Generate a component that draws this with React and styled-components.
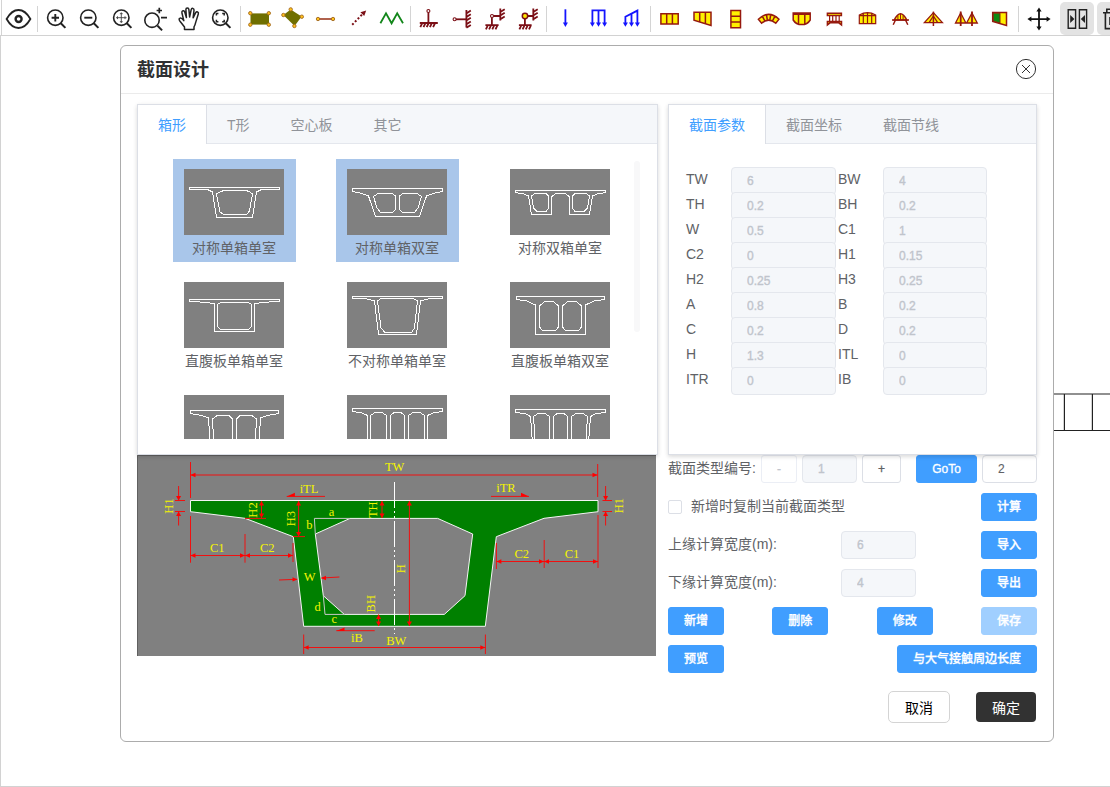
import React from "react";
import styled, { createGlobalStyle, css } from "styled-components";

const GlobalStyle = createGlobalStyle`
  *, *::before, *::after { box-sizing: border-box; }
  body {
    margin: 0;
    overflow: hidden;
    background: #fff;
    color: #606266;
    font-family: "Liberation Sans", "Noto Sans CJK SC", sans-serif;
    font-size: 14px;
  }
  button, input { font-family: inherit; margin: 0; }
`;

/* ---------- page frame ---------- */

const Page = styled.div`
  position: relative;
  display: flex;
  flex-direction: column;
  width: 1110px;
  height: 787px;
  overflow: hidden;
`;

const Toolbar = styled.header`
  display: flex;
  flex: none;
  height: 35px;
  margin-left: 1px;
  border-left: 1px solid #d4d4d4;
`;

const Separator = styled.i`
  flex: none;
  width: 1px;
  height: 26px;
  margin: 6px 2px 0 ${(p) => (p.$tight ? 1 : 2)}px;
  background: #d4d4d4;
`;

const Tool = styled.button`
  display: block;
  flex: none;
  width: ${(p) => (p.$active ? 34 : 33)}px;
  height: ${(p) => (p.$active ? 33 : 36)}px;
  margin-top: ${(p) => (p.$active ? 2 : 0)}px;
  margin-left: ${(p) => p.$gap || 0}px;
  padding: 0;
  border: 0;
  border-radius: 5px;
  background: ${(p) => (p.$active ? "#e3e3e3" : "transparent")};

  svg {
    display: block;
    margin-top: ${(p) => (p.$active ? -2 : 0)}px;
    overflow: visible;
  }
`;

const Canvas = styled.main`
  display: flex;
  flex: 1;
  align-items: flex-start;
  justify-content: flex-end;
  padding-top: 357px;
  border: 1px solid #d2d2d2;
  border-right: 0;

  svg { display: block; }
`;

/* ---------- dialog ---------- */

const Dialog = styled.section`
  position: absolute;
  left: 120px;
  top: 45px;
  width: 934px;
  height: 697px;
  border: 1px solid #acacac;
  border-radius: 6px;
  background: #fff;
`;

const DialogHeader = styled.div`
  display: flex;
  align-items: center;
  justify-content: space-between;
  height: 48px;
  padding: 0 16px;
  border-bottom: 1px solid #ebebeb;
`;

const Title = styled.h2`
  margin: 0;
  color: #303133;
  font-size: 18px;
  font-weight: 700;
  line-height: 24px;
`;

const Close = styled.button`
  width: 22px;
  height: 22px;
  margin-bottom: 2px;
  padding: 0;
  border: 0;
  background: none;
  svg { display: block; }
`;

const DialogBody = styled.div`
  display: flex;
  gap: 10px;
  padding: 10px 16px 0;
`;

const Column = styled.div`
  width: ${(p) => p.$width}px;
`;

const Panel = styled.div`
  position: relative;
  z-index: 1;
  height: 351px;
  border: 1px solid #dcdfe6;
  background: #fff;
  box-shadow: 0 2px 4px rgba(0, 0, 0, 0.12), 0 0 6px rgba(0, 0, 0, 0.04);
`;

const TabBar = styled.div`
  display: flex;
  height: 39px;
  border-bottom: 1px solid #e4e7ed;
  background: #f5f7fa;
`;

const Tab = styled.div`
  height: 39px;
  margin-left: -1px;
  padding: 0 20px;
  border: 1px solid transparent;
  border-top: 0;
  border-bottom: 0;
  color: #909399;
  line-height: 40px;
  white-space: nowrap;
  ${(p) =>
    p.$active &&
    css`
      border-color: #dcdfe6;
      background: #fff;
      color: #409eff;
    `}
`;

const Gallery = styled.div`
  display: grid;
  grid-template-columns: repeat(3, 163px);
  grid-auto-rows: 103px;
  row-gap: 10px;
  justify-items: center;
  height: 280px;
  margin: 15px 15px 0;
  overflow: hidden;
`;

const ScrollThumb = styled.i`
  position: absolute;
  top: 56px;
  right: 17px;
  width: 6px;
  height: 171px;
  border-radius: 3px;
  background: #f8f8f9;
`;

const Card = styled.figure`
  display: flex;
  flex-direction: column;
  align-items: center;
  width: 123px;
  height: 103px;
  margin: 0;
  padding: 10px 1px 0 0;
  background: ${(p) => (p.$selected ? "#a9c6ea" : "transparent")};

  svg {
    flex: none;
    background: #808080;
    fill: none;
    stroke: #fff;
    shape-rendering: crispEdges;
  }
`;

const Caption = styled.figcaption`
  line-height: 26px;
  white-space: nowrap;
`;

const Diagram = styled.svg`
  display: block;
  background: #808080;

  text {
    fill: #f4f400;
    font-family: "Liberation Serif", serif;
    font-size: 12.5px;
    text-anchor: middle;
  }
`;

/* ---------- form ---------- */

const Params = styled.div`
  display: grid;
  grid-template-columns: 45px 107px 45px 104px;
  grid-auto-rows: 25px;
  padding: 23px 17px 0;
  line-height: 25px;
`;

const Input = styled.input`
  display: block;
  position: relative;
  width: ${(p) => p.$width}px;
  height: 28px;
  padding: 0 15px;
  border: 1px solid ${(p) => (p.disabled ? "#e4e7ed" : "#dcdfe6")};
  border-radius: 4px;
  outline: 0;
  background: ${(p) => (p.disabled ? "#f5f7fa" : "#fff")};
  color: ${(p) => (p.disabled ? "#c0c4cc" : "#606266")};
  font-size: 12px;
  line-height: 26px;
  -webkit-text-stroke: ${(p) => (p.disabled ? 0.35 : 0.1)}px;
`;

const Controls = styled.div`
  display: flex;
  flex-direction: column;
  gap: 10px;
`;

const Row = styled.div`
  display: flex;
  align-items: center;
  justify-content: space-between;
  height: 28px;
`;

const Label = styled.label`
  display: flex;
  align-items: center;
  width: ${(p) => (p.$width ? p.$width + "px" : "auto")};
  height: 28px;
  padding-bottom: 4px;
  white-space: nowrap;
`;

const Cluster = styled.div`
  display: flex;
  gap: ${(p) => p.$gap}px;
  align-items: center;
`;

const Checkbox = styled.i`
  width: 14px;
  height: 14px;
  border: 1px solid #dcdfe6;
  border-radius: 2px;
  background: #fff;
`;

const Button = styled.button`
  height: 28px;
  width: ${(p) => p.$width || 56}px;
  padding: 0;
  border: 1px solid ${(p) => (p.disabled ? "#a0cfff" : "#409eff")};
  border-radius: 3px;
  background: ${(p) => (p.disabled ? "#a0cfff" : "#409eff")};
  color: #fff;
  font-size: 12px;
  font-weight: 500;
  line-height: 24px;
  white-space: nowrap;
  -webkit-text-stroke: 0.3px;
`;

const StepButton = styled(Button)`
  border-color: ${(p) => (p.disabled ? "#ebeef5" : "#dcdfe6")};
  background: #fff;
  color: ${(p) => (p.disabled ? "#c0c4cc" : "#606266")};
`;

const Footer = styled.div`
  display: flex;
  align-items: center;
  justify-content: flex-end;
  gap: 26px;
  margin: 18px 1px 0 0;
`;

const FooterButton = styled.button`
  width: ${(p) => (p.$primary ? 60 : 62)}px;
  height: ${(p) => (p.$primary ? 30 : 32)}px;
  padding: 0 0 1px;
  border: ${(p) => (p.$primary ? 0 : "1px solid #d4d4d4")};
  border-radius: ${(p) => (p.$primary ? 4 : 5)}px;
  background: ${(p) => (p.$primary ? "#323232" : "#fff")};
  color: ${(p) => (p.$primary ? "#fff" : "#000")};
  font-size: 14px;
`;

/* ---------- toolbar drawings, on a 33 x 36 field ---------- */

const Lens = ({ cx = 15.3, cy = 17.7, r = 7.7 }) => (
  <g stroke="#222" fill="none">
    <circle cx={cx} cy={cy} r={r} strokeWidth="1.6" />
    <path d={`M${cx + 5.5} ${cy + 5.5}l4.6 4.7`} strokeWidth="2" />
  </g>
);

const maroon = { stroke: "#7b0f16", fill: "none", strokeWidth: 1.8 };
const yellow = { stroke: "#96190f", fill: "#fff000", strokeWidth: 1.5 };
const Node = ({ x, y, r = 1.7 }) => (
  <circle cx={x} cy={y} r={r} fill="#ffc21a" stroke="#a0661e" strokeWidth="0.9" />
);
const ground = (x0, x1, y) => {
  let d = `M${x0} ${y}H${x1}`;
  for (let x = x0 + 2.5; x <= x1; x += 3.2) d += `M${x} ${y}l-2 4.2`;
  return d;
};
const wall = (x, y0, y1) => {
  let d = `M${x} ${y0}V${y1}`;
  for (let y = y0 + 3.4; y <= y1 + 0.5; y += 3.6) d += `M${x} ${y}l4.4 -2.8`;
  return d;
};

const icons = {
  eye: (
    <g stroke="#222" fill="none">
      <path d="M4.6 19C8 13 12 10 16.5 10S25 13 28.4 19C25 25 21 28 16.5 28S8 25 4.6 19Z" strokeWidth="1.8" />
      <circle cx="16.6" cy="19" r="3" strokeWidth="2.4" />
    </g>
  ),
  zoomIn: (<g><Lens /><path d="M11.6 17.7h7.4M15.3 14v7.4" stroke="#222" strokeWidth="1.9" /></g>),
  zoomOut: (<g><Lens /><path d="M11.3 17.7h8" stroke="#222" strokeWidth="1.9" /></g>),
  zoomAll: (
    <g><Lens /><path d="M10 17.7h10.6M15.3 12.4v10.6M11.5 16.3v2.8M19 16.3v2.8M13.9 13.7h2.8M13.9 21.7h2.8" stroke="#444" strokeWidth="0.9" /></g>
  ),
  zoomScale: (
    <g><Lens cx={13} cy={20.2} r={7.2} /><path d="M17.6 10.5h5.4M20.3 7.8v5.4M22 17.7h6" stroke="#222" strokeWidth="1.7" /></g>
  ),
  hand: (
    <path
      d="M12.5 29.4V27L8 21.2C6.7 19.4 7 18.4 8 18.1C9.2 17.7 10.3 18.6 11.8 20.6L9.9 12.8C9.5 10.6 12.2 10 12.8 12.2L14.4 17.6L13.9 9.6C13.9 7.5 16.7 7.4 16.9 9.6L17.6 17L19.2 9.6C19.7 7.6 22.3 8.2 22 10.3L21.1 17.8L23.7 12.7C24.7 11 27 12 26.3 14L23.7 22.4C23.3 24.3 22.8 25.6 22 26.8V29.4Z"
      fill="none" stroke="#222" strokeWidth="1.5" strokeLinejoin="round"
    />
  ),
  zoomFit: (
    <g><Lens /><path d="M11.4 15.6v-2h2M17.2 13.6h2v2M19.2 19.8v2h-2M13.4 21.8h-2v-2" fill="none" stroke="#222" strokeWidth="1.5" /></g>
  ),
  plate: (
    <g><rect x="7.5" y="13.4" width="18.5" height="11.2" fill="#6f6f00" />
      <Node x={7.3} y={13.2} /><Node x={25.8} y={13.2} /><Node x={7.3} y={24.7} /><Node x={25.8} y={24.7} /></g>
  ),
  plateTurned: (
    <g><path d="M14.7 9.6L25.6 16.6L18.6 26L7.4 15Z" fill="#6f6f00" />
      <Node x={14.7} y={9.4} /><Node x={7.4} y={15} /><Node x={25.8} y={16.7} /><Node x={18.4} y={26} /></g>
  ),
  bar: (<g><path d="M9 19h15" stroke="#9c3a20" strokeWidth="1.6" /><Node x={9} y={19} /><Node x={24} y={19} /></g>),
  dotted: (
    <g><path d="M10.2 24.8L21.5 13" stroke="#7b0f16" strokeWidth="2" strokeDasharray="2 2" />
      <path d="M24.2 10.4L18.4 12.2L22.2 16Z" fill="#7b0f16" /></g>
  ),
  zigzag: (<path d="M5.4 23.3L11 13.4L16.6 23.3L22.2 13.4L28 23.3" fill="none" stroke="#12861a" strokeWidth="1.8" />),
  supportV: (<g {...maroon}><path d="M15.4 12.6V23" /><path d={ground(6.8, 24.8, 23)} /><circle cx="15.4" cy="11" r="1.5" strokeWidth="1.1" /></g>),
  supportH: (<g {...maroon}><path d="M10 19.3H20.4" /><path d={wall(20.4, 10, 27.6)} /><circle cx="8.6" cy="19.3" r="1.5" strokeWidth="1.1" /></g>),
  supportVH: (
    <g {...maroon}><path d="M14.4 16H21.3M12.9 17.4V25" /><path d={wall(21.3, 8.6, 20.6)} /><path d={ground(6.4, 19.6, 25.2)} />
      <circle cx="13" cy="16" r="1.5" strokeWidth="1.1" /></g>
  ),
  supportFix: (
    <g {...maroon}><path d="M16 16H21.3M12.9 18V25" /><path d={wall(21.3, 8.6, 20.6)} /><path d={ground(6.9, 19.6, 25.2)} />
      <circle cx="13" cy="16" r="2.7" fill="#ffe600" strokeWidth="1.5" /></g>
  ),
  load: (<g stroke="#1414ff" fill="#1414ff"><path d="M16.4 9.3V24" strokeWidth="1.8" /><path d="M13.9 22.4h5L16.4 27z" stroke="none" /></g>),
  loadUniform: (
    <g stroke="#1414ff" fill="#1414ff"><path d="M10.4 24V10.4H22.6V24M16.5 10V24" fill="none" strokeWidth="1.8" />
      <path d="M7.9 22.6h5L10.4 26.8zM14 22.6h5L16.5 26.8zM20.1 22.6h5L22.6 26.8z" stroke="none" /></g>
  ),
  loadLinear: (
    <g stroke="#1414ff" fill="#1414ff"><path d="M10.4 24V16.8L22.4 10.6V24M16.5 13.6V24" fill="none" strokeWidth="1.8" />
      <path d="M7.9 22.6h5L10.4 26.8zM14 22.6h5L16.5 26.8zM19.9 22.6h5L22.4 26.8z" stroke="none" /></g>
  ),
  beam: (<path {...yellow} d="M7.9 13.7h17.3v10.4H7.9zM13.7 13.7v10.4M19.4 13.7v10.4" />),
  taper: (<path {...yellow} d="M8 12.3H25V25.4L8 20.2ZM13.7 12.3v9.6M19.4 12.3v11.4" />),
  column: (<path {...yellow} d="M11.9 10.4h9.6v17.4h-9.6zM11.9 16.2h9.6M11.9 22h9.6" />),
  arch: (<path {...yellow} d="M6.4 19.2Q16.6 9.6 27 19.2L23.8 23.2Q16.6 17 9.6 23.2ZM10.3 16.2l2.5 4.6M14.4 14.5l.9 5M18.8 14.5l-.9 5M23 16.2l-2.5 4.6" />),
  bowl: (<path {...yellow} d="M8.2 13H25.2V20Q22.5 24.6 16.7 24.6T8.2 20ZM13.5 13v11M19.8 13v11M8.2 14.2H25.2" />),
  frame: (
    <g><path {...yellow} d="M9.4 13.2h14v2.4h-14z" />
      <path {...yellow} fill="none" strokeWidth="1.2" d="M11.6 15.6v6M14.7 15.6v5.6M18 15.6v5.6M21.2 15.6v6" />
      <path {...yellow} d="M9.4 24.9V21.6H23.5V24.9L20.8 22.8H12Z" /></g>
  ),
  vault: (<path {...yellow} strokeWidth="1.2" d="M8.3 23.6V15Q16.5 10.3 24.7 15V23.6ZM12.3 13.4v10.2M16.5 12.6v11M20.7 13.4v10.2M7.8 15.6H25.2" />),
  archBridge: (<g><path {...yellow} d="M10.2 20Q16.5 7.4 22.8 20Z" /><path {...yellow} fill="none" d="M8 20H25M9.2 24.8L11.5 20M23.8 24.8L21.5 20" /><path {...yellow} fill="none" strokeWidth="1" d="M13.9 15.5V20M16.5 13.5V20M19.1 15.5V20" /></g>),
  cableStay: (<g><path {...yellow} strokeWidth="1.3" d="M16.4 12.6L25.4 22.6H7.4ZM16.4 16L20.5 22.4M16.4 16L12.2 22.4" /><path {...yellow} d="M16.4 11.6V26" /></g>),
  cableStayTwin: (<g><path {...yellow} strokeWidth="1.3" d="M10.7 13L15.9 23H5.5ZM22 13L27.3 23H16.6Z" /><path {...yellow} strokeWidth="1.8" d="M10.7 11.6V26M22 11.6V26" /></g>),
  section: (<g><path {...yellow} d="M9.7 12.6H23.5V25.4L9.7 21.4Z" /><path d="M10.2 13.2H17V23L10.2 21Z" fill="#0d8a12" stroke="#8c2210" strokeWidth="1" /></g>),
  move: (
    <g><path d="M9 19.1h18M18 10v18" stroke="#111" strokeWidth="1.8" />
      <path d="M6.4 19.1l4-2.6v5.2zM29.6 19.1l-4-2.6v5.2zM18 7.4l-2.6 4h5.2zM18 30.6l-2.6-4h5.2z" fill="#111" /></g>
  ),
  mirror: (
    <g><path d="M8.2 9.8h7.4v18.4H8.2zM19.4 9.8h7.2v18.4h-7.2z" fill="none" stroke="#222" strokeWidth="1.4" />
      <path d="M10.2 15v8l4.2-4zM25 15v8l-4.2-4z" fill="#222" /></g>
  ),
  trash: (<path d="M6 12.8h20M9.8 12.5V9.3h10v3.2M8.4 13v15.6h15V13M13 17v8M18 17v8" fill="none" stroke="#222" strokeWidth="1.6" />),
};

const toolGroups = [
  ["eye"],
  ["zoomIn", "zoomOut", "zoomAll", "zoomScale", "hand", "zoomFit"],
  ["plate", "plateTurned", "bar", "dotted", "zigzag"],
  ["supportV", "supportH", "supportVH", "supportFix"],
  ["load", "loadUniform", "loadLinear"],
  ["beam", "taper", "column", "arch", "bowl", "frame", "vault", "archBridge", "cableStay", "cableStayTwin", "section"],
];

const ToolButton = ({ name, ...rest }) => (
  <Tool {...rest}>
    <svg width="33" height="36" viewBox="0 0 33 36">{icons[name]}</svg>
  </Tool>
);

/* ---------- section thumbnails ---------- */

const sections = [
  {
    name: "对称单箱单室", selected: true,
    d: "M23.5 20.5H5.5V18.5H95.5V20.5H77.5L72.5 23L68.5 48.5H32.5L28.5 23L23.5 20.5M36.5 22.5L40.5 21.5H61.5L65.5 22.5L68.5 25L65.5 42L62.5 45.5H39.5L36 43L32.5 25Z",
  },
  {
    name: "对称单箱双室", selected: true,
    d: "M5.5 19.5H95.5V22.5L86 24.5L79.5 27L72.5 47.5H28.5L21.5 27L15 24.5L5.5 22.5ZM31 24.5H45.5L48.5 27V40.5L45.5 43.5H33.5L30 39L26.5 27.5ZM70 24.5H55.5L52.5 27V40.5L55.5 43.5H67.5L71 39L74.5 27.5Z",
  },
  {
    name: "对称双箱单室",
    d: "M5.5 21.5H95.5V23.5L87 25L82.5 27L79.5 45.5H59.5V28L55.5 24.5H45.5L41.5 28V45.5H21.5L18.5 27L14 25L5.5 23.5ZM25 24.5H36L38.5 27V39.5L36 42.5H27L23.5 39L21.5 27ZM76 24.5H65L62.5 27V39.5L65 42.5H74L77.5 39L79.5 27Z",
  },
  {
    name: "直腹板单箱单室",
    d: "M5.5 17.5H95.5V19.5H90L70.5 21.5V49.5H30.5V21.5L11 19.5H5.5ZM36.5 20.5H64.5L67.5 22.5V44.5L64.5 47.5H36.5L33.5 44.5V22.5Z",
  },
  {
    name: "不对称单箱单室",
    d: "M5.5 14.5H95.5V16.5H83L73.5 19L69.5 52.5H31.5L27.5 19L18 16.5H5.5ZM33.5 16.5H66.5L70.5 19L67.5 46L64.5 50.5H38L34 46L30.5 19Z",
  },
  {
    name: "直腹板单箱双室",
    d: "M6.5 14.5H94.5V17.5L84 19L75.5 23V52.5H25.5V23L17 19L6.5 17.5ZM34.5 19.5H43.5L48.5 24V45L45.5 48.5H32.5L29.5 45V24ZM57.5 19.5H66.5L71.5 24V45L68.5 48.5H55.5L52.5 45V24Z",
  },
  {
    d: "M6.5 15.5H94.5V18.5L83 20.5L76.5 23L74.5 55H26.5L24.5 23L18 20.5L6.5 18.5ZM28.5 24L33 20.5H45L48.5 24V52H30L28.5 24ZM56 20.5H68L72.5 24L71 52H52.5V24Z",
  },
  {
    d: "M5.5 13.5H95.5V16.5L86 18L80.5 20.5V55H20.5V20.5L15 18L5.5 16.5ZM23.5 20.5L28 17.5H35L39.5 20.5V52H23.5ZM43.5 20.5L47 17.5H54L57.5 20.5V52H43.5ZM61.5 20.5L66 17.5H73L77.5 20.5V52H61.5Z",
  },
  {
    d: "M5.5 14.5H95.5V17.5L86 18.5L80.5 21.5L78 55H23L20.5 21.5L15 18.5L5.5 17.5ZM23.5 21.5L28 18.5H35L39.5 21.5V52H25.5ZM43.5 21.5L47 18.5H54L57.5 21.5V52H43.5ZM61.5 21.5L66 18.5H73L77.5 21.5L75.5 52H61.5Z",
  },
];

/* ---------- dimension drawing ---------- */

const heads = { l: [5, -2.2, 5, 2.2], r: [-5, -2.2, -5, 2.2], u: [-2.5, 4.5, 2.5, 4.5], d: [-2.5, -4.5, 2.5, -4.5] };
const Head = ({ x, y, to }) => {
  const [a, b, c, d] = heads[to];
  return <path d={`M${x} ${y}l${a} ${b}L${x + c} ${y + d}Z`} fill="#f00" stroke="none" />;
};
const HDim = ({ x0, x1, y }) => (<g><path d={`M${x0} ${y}H${x1}`} /><Head x={x0} y={y} to="l" /><Head x={x1} y={y} to="r" /></g>);
const VDim = ({ y0, y1, x }) => (<g><path d={`M${x} ${y0}V${y1}`} /><Head x={x} y={y0} to="u" /><Head x={x} y={y1} to="d" /></g>);
const Turned = ({ x, y, children }) => <text transform={`translate(${x} ${y}) rotate(-90)`}>{children}</text>;

const SectionDiagram = () => (
  <Diagram width="519" height="201" viewBox="137 455 519 201">
    <path
      d="M190.5 500.5H598V511.7L544 518.3L496.3 536.7L485.3 626.3H303.7L293.3 536.7L245 518.3L190.5 511.7ZM350 518.4H437.7L472.7 534L465 595.7L444.3 614.4H344.3L323.3 595.7L315.3 534Z"
      fill="#008000" fillRule="evenodd" stroke="#f4f4f4" strokeWidth="1"
    />
    <path d="M315.3 534L314.4 518.4H350M323.3 595.7L325 614.4H344.3" fill="none" stroke="#c8c8c8" />
    <path d="M394.5 482V634" stroke="#fff" strokeDasharray="26 3 2 3 2 3" />
    <g stroke="#f01010" fill="none">
      <path d="M190.5 462V498M597.7 464V497M190.5 516V562.7M245 534V562.7M293 543V562M496.4 543V569M544.2 540V568M598 515V568" />
      <path d="M303.7 634.5V654M485.4 634.5V654M175 500.5h10M175 511.5h10M602.5 500.5h9.5M602.5 511.5h9.5M245 518.4h21M293 536.6h12" />
      <HDim x0={190.5} x1={597.5} y={475} />
      <HDim x0={190.5} x1={245} y={555.5} />
      <HDim x0={245} x1={293} y={555.5} />
      <HDim x0={496.4} x1={544} y={561.5} />
      <HDim x0={544} x1={598} y={561.5} />
      <HDim x0={303.7} x1={485.3} y={647.5} />
      <VDim y0={501} y1={518} x={261.5} />
      <VDim y0={501} y1={536.5} x={298.6} />
      <VDim y0={501} y1={518} x={382} />
      <VDim y0={614.5} y1={626} x={378.6} />
      <VDim y0={501} y1={626} x={409.4} />
      <path d="M178.6 486V500M178.6 512V525.5M605.6 486V500M605.6 512V525.5M279 580L297 579.3M339.4 577L321.5 578M286.7 496.4H325M491 496.4H529M336.3 630.7H374.7" />
      <Head x={178.6} y={500.5} to="d" /><Head x={178.6} y={511.5} to="u" />
      <Head x={605.6} y={500.5} to="d" /><Head x={605.6} y={511.5} to="u" />
      <Head x={297.5} y={579.4} to="r" /><Head x={321} y={578} to="l" />
      <path d="M286.7 496.6L294.9 492.8V496.6ZM529 496.6L521 492.8V496.6ZM336.3 631L344.5 627.4V631Z" fill="#f00" stroke="none" />
    </g>
    <text x="394.7" y="470.6">TW</text>
    <text x="309" y="493">iTL</text>
    <text x="506" y="492.2">iTR</text>
    <text x="396.3" y="645">BW</text>
    <text x="357" y="642">iB</text>
    <text x="217.3" y="552">C1</text>
    <text x="267.3" y="552">C2</text>
    <text x="521.7" y="558">C2</text>
    <text x="572" y="558">C1</text>
    <text x="309.7" y="580.7">W</text>
    <text x="331.6" y="515.7">a</text>
    <text x="309.3" y="529.3">b</text>
    <text x="317.7" y="611.3">d</text>
    <text x="334.3" y="622.7">c</text>
    <Turned x={172.9} y={506}>H1</Turned>
    <Turned x={257} y={510}>H2</Turned>
    <Turned x={295.4} y={518.7}>H3</Turned>
    <Turned x={377} y={509.7}>TH</Turned>
    <Turned x={375.2} y={603.7}>BH</Turned>
    <Turned x={405.2} y={568.7}>H</Turned>
    <Turned x={622.8} y={505.7}>H1</Turned>
    <path d="M137.5 656V455.5H656" fill="none" stroke="#606060" />
  </Diagram>
);

const params = [
  ["TW", "6"], ["BW", "4"], ["TH", "0.2"], ["BH", "0.2"], ["W", "0.5"], ["C1", "1"],
  ["C2", "0"], ["H1", "0.15"], ["H2", "0.25"], ["H3", "0.25"], ["A", "0.8"], ["B", "0.2"],
  ["C", "0.2"], ["D", "0.2"], ["H", "1.3"], ["ITL", "0"], ["ITR", "0"], ["IB", "0"],
];

export default function App() {
  return (
    <Page>
      <GlobalStyle />
      <Toolbar>
        {toolGroups.map((group, i) => (
          <React.Fragment key={i}>
            {group.map((name) => <ToolButton key={name} name={name} />)}
            <Separator $tight={i === 3} />
          </React.Fragment>
        ))}
        <ToolButton name="move" />
        <ToolButton name="mirror" $active $gap={6} />
        <ToolButton name="trash" $active $gap={3} />
      </Toolbar>
      <Canvas>
        <svg width="56" height="40" viewBox="1054 393 56 40">
          <path d="M1054 394H1110M1054 430.5H1110M1064.4 394V430.5M1092.4 394V430.5" stroke="#222" strokeWidth="1.2" />
        </svg>
      </Canvas>

      <Dialog>
        <DialogHeader>
          <Title>截面设计</Title>
          <Close>
            <svg width="22" height="22" viewBox="0 0 22 22" fill="none" stroke="#333">
              <circle cx="11" cy="11" r="9.6" />
              <path d="M7 7l8 8M15 7l-8 8" />
            </svg>
          </Close>
        </DialogHeader>
        <DialogBody>
          <Column $width={521}>
            <Panel>
              <TabBar>
                <Tab $active>箱形</Tab>
                <Tab>T形</Tab>
                <Tab>空心板</Tab>
                <Tab>其它</Tab>
              </TabBar>
              <Gallery>
                {sections.map((s, i) => (
                  <Card key={i} $selected={s.selected}>
                    <svg width="100" height="66" viewBox="0 0 100 66"><path d={s.d} /></svg>
                    {s.name && <Caption>{s.name}</Caption>}
                  </Card>
                ))}
              </Gallery>
              <ScrollThumb />
            </Panel>
            <SectionDiagram />
          </Column>

          <Column $width={369}>
            <Panel>
              <TabBar>
                <Tab $active>截面参数</Tab>
                <Tab>截面坐标</Tab>
                <Tab>截面节线</Tab>
              </TabBar>
              <Params>
                {params.map(([name, value], i) => (
                  <React.Fragment key={name}>
                    <span>{name}</span>
                    <Input disabled defaultValue={value} $width={i % 2 ? 104 : 105} />
                  </React.Fragment>
                ))}
              </Params>
            </Panel>
            <Controls>
              <Row>
                <Label>截面类型编号:</Label>
                <Cluster $gap={15}>
                  <Cluster $gap={5}>
                    <StepButton disabled $width={36}>-</StepButton>
                    <Input disabled defaultValue="1" $width={55} />
                    <StepButton $width={39}>+</StepButton>
                  </Cluster>
                  <Cluster $gap={5}>
                    <Button $width={61}>GoTo</Button>
                    <Input defaultValue="2" $width={55} />
                  </Cluster>
                </Cluster>
              </Row>
              <Row>
                <Cluster $gap={9}>
                  <Checkbox />
                  <Label>新增时复制当前截面类型</Label>
                </Cluster>
                <Button>计算</Button>
              </Row>
              <Row>
                <Cluster $gap={0}>
                  <Label $width={173}>上缘计算宽度(m):</Label>
                  <Input disabled defaultValue="6" $width={75} />
                </Cluster>
                <Button>导入</Button>
              </Row>
              <Row>
                <Cluster $gap={0}>
                  <Label $width={173}>下缘计算宽度(m):</Label>
                  <Input disabled defaultValue="4" $width={75} />
                </Cluster>
                <Button>导出</Button>
              </Row>
              <Row>
                <Button>新增</Button>
                <Button>删除</Button>
                <Button>修改</Button>
                <Button disabled>保存</Button>
              </Row>
              <Row>
                <Button>预览</Button>
                <Button $width={140}>与大气接触周边长度</Button>
              </Row>
            </Controls>
            <Footer>
              <FooterButton>取消</FooterButton>
              <FooterButton $primary>确定</FooterButton>
            </Footer>
          </Column>
        </DialogBody>
      </Dialog>
    </Page>
  );
}
